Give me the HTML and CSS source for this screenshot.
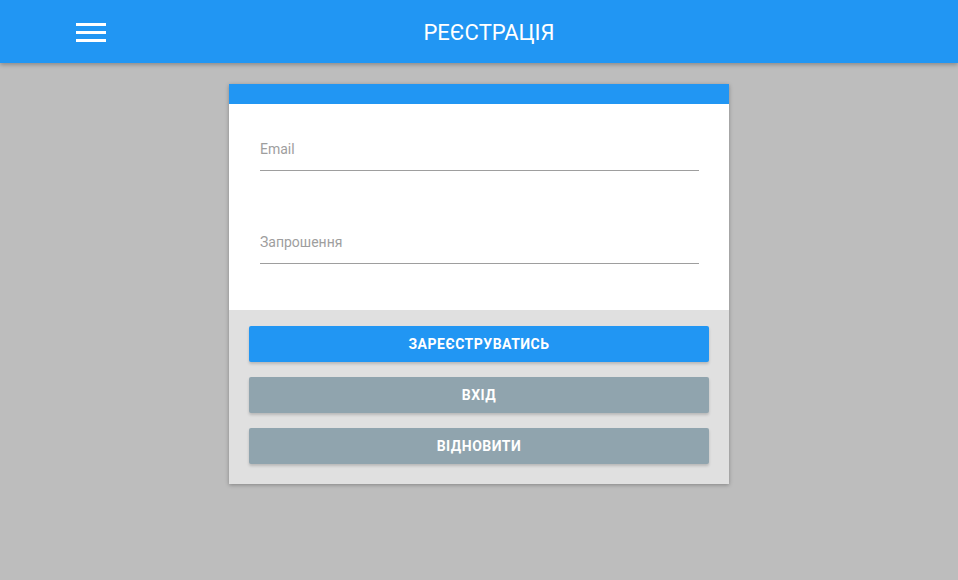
FILE: index.html
```html
<!DOCTYPE html>
<html lang="uk">
<head>
<meta charset="utf-8">
<title>Реєстрація</title>
<link rel="stylesheet" href="styles.css">
</head>
<body>
<header class="topbar">
  <button class="menu-btn" aria-label="Меню">
    <svg width="30" height="19" viewBox="0 0 30 19"><rect x="0" y="0" width="30" height="3" fill="#fff"/><rect x="0" y="8" width="30" height="3" fill="#fff"/><rect x="0" y="16" width="30" height="3" fill="#fff"/></svg>
  </button>
  <h1 class="title">РЕЄСТРАЦІЯ</h1>
</header>
<main class="page">
  <section class="card">
    <div class="card-strip"></div>
    <div class="card-form">
      <div class="field"><span class="label">Email</span></div>
      <div class="field field-2"><span class="label">Запрошення</span></div>
    </div>
    <div class="card-actions">
      <button class="btn btn-primary">Зареєструватись</button>
      <button class="btn btn-gray">Вхід</button>
      <button class="btn btn-gray">Відновити</button>
    </div>
  </section>
</main>
</body>
</html>
```
FILE: styles.css
```css
* { box-sizing: border-box; }
html, body { margin: 0; padding: 0; }
body {
  background: #bdbdbd;
  font-family: Roboto, "Liberation Sans", sans-serif;
  width: 958px;
  height: 580px;
  overflow: hidden;
}
.topbar {
  height: 63px;
  background: #2196f3;
  box-shadow: 0 2px 4px rgba(0,0,0,0.25);
  display: flex;
  align-items: center;
  position: relative;
}
.menu-btn {
  background: none;
  border: 0;
  padding: 0;
  margin-left: 76px;
  width: 30px;
  height: 19px;
  display: flex;
  margin-top: 1px;
}
.title {
  margin: 0;
  position: absolute;
  left: 0;
  right: 0;
  top: 1px;
  text-align: center;
  font-weight: 400;
  font-size: 22px;
  color: #fff;
  pointer-events: none;
  padding-left: 20px;
  line-height: 63px;
}
.page {
  display: flex;
  justify-content: center;
  padding-top: 21px;
}
.card {
  width: 500px;
  background: #fff;
  box-shadow: 0 1px 4px rgba(0,0,0,0.3);
}
.card-strip {
  height: 20px;
  background: #2196f3;
}
.card-form {
  padding: 35px 30px 46px 31px;
}
.field {
  border-bottom: 1px solid #9e9e9e;
  padding-bottom: 11px;
}
.field-2 { margin-top: 61px; }
.label {
  display: block;
  font-size: 14px;
  line-height: 20px;
  color: #9e9e9e;
}
.card-actions {
  background: #e0e0e0;
  padding: 16px 20px 20px 20px;
  display: flex;
  flex-direction: column;
  gap: 15px;
}
.btn {
  height: 36px;
  border: 0;
  border-radius: 2px;
  color: #fff;
  font-family: Roboto, "Liberation Sans", sans-serif;
  font-weight: 700;
  font-size: 14px;
  text-transform: uppercase;
  letter-spacing: 0.5px;
  box-shadow: 0 2px 3px rgba(0,0,0,0.18);
}
.btn-primary { background: #2196f3; }
.btn-gray { background: #90a4ae; }
```
